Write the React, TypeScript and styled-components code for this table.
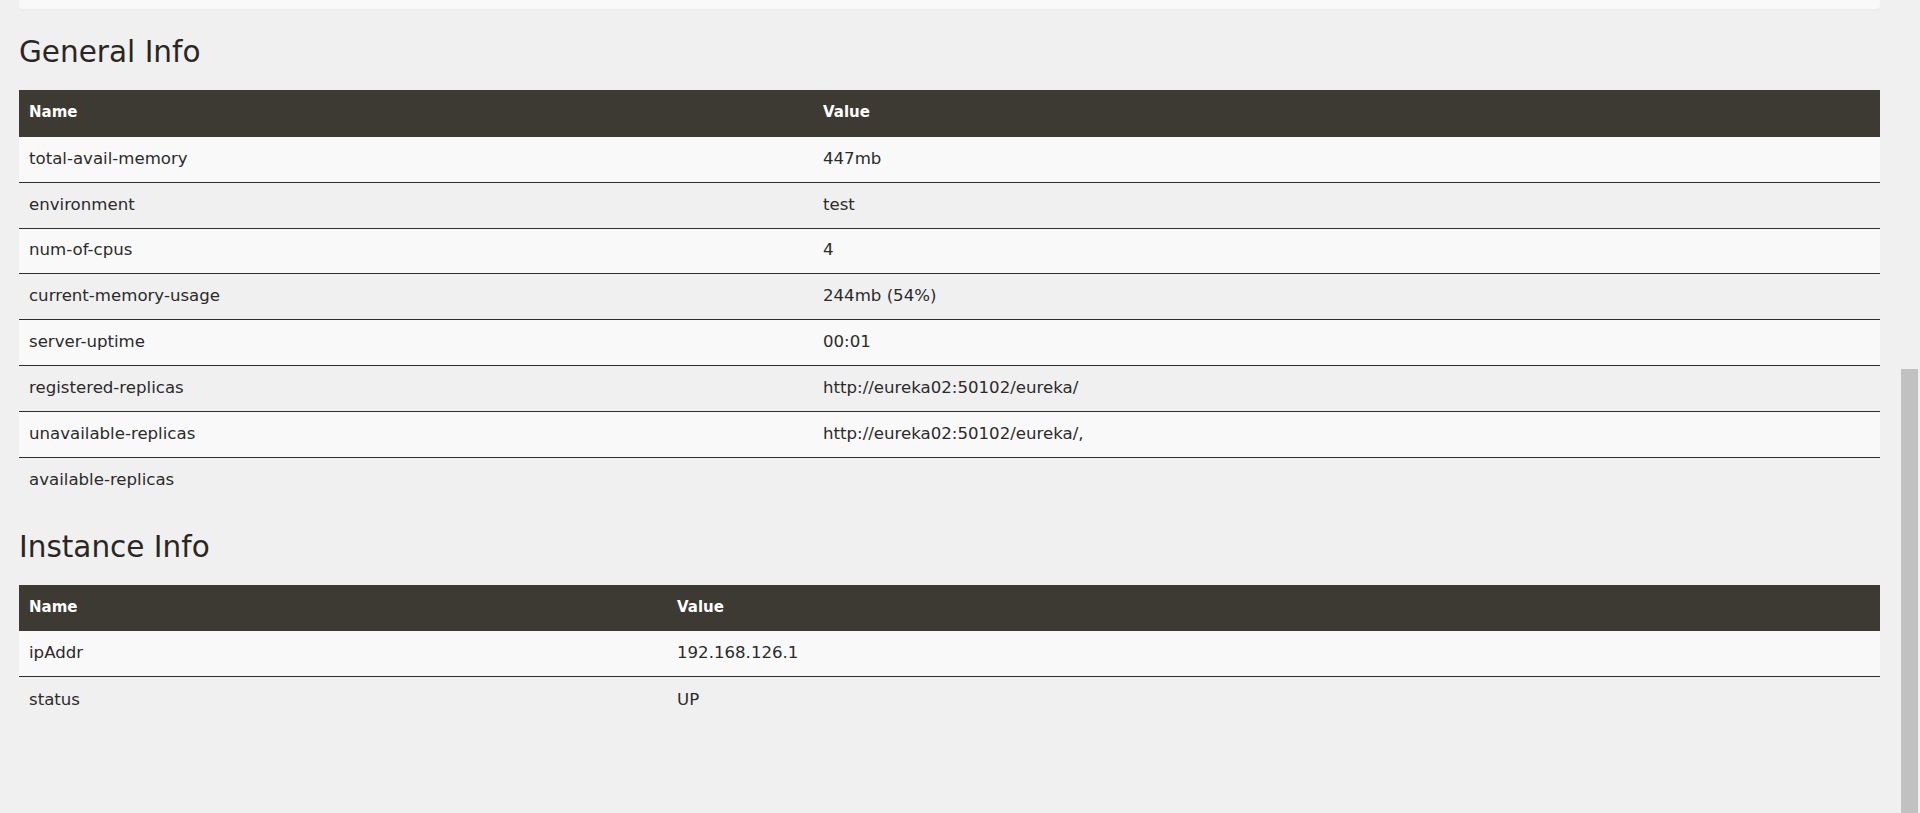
import React from "react";
import styled, { createGlobalStyle } from "styled-components";

const GlobalStyle = createGlobalStyle`
  html, body {
    margin: 0;
    padding: 0;
    height: 100%;
    overflow: hidden;
    background: #f0f0f0;
  }
  body {
    font-family: "DejaVu Sans", "Noto Sans", sans-serif;
    color: #2b2b2b;
  }
`;

const Page = styled.div`
  display: flex;
  height: 100vh;
`;

const Main = styled.div`
  flex: 1;
  min-width: 0;
  padding: 0 20px 0 19px;
`;

const TopCard = styled.div`
  height: 9px;
  background: #f9f9f9;
  border-radius: 0 0 4px 4px;
  box-shadow: 0 1px 2px rgba(0, 0, 0, 0.03);
`;

const SectionTitle = styled.h2`
  margin: 25px 0 20px;
  font-size: 29.5px;
  line-height: 36px;
  font-weight: 400;
  color: #2a2723;
`;

const Table = styled.div`
  width: 100%;
`;

const Row = styled.div<{ $nameWidth: number; $striped?: boolean; $last?: boolean }>`
  display: grid;
  grid-template-columns: ${(p) => p.$nameWidth}px 1fr;
  align-items: center;
  box-sizing: border-box;
  height: 45.86px;
  padding-bottom: 2px;
  background: ${(p) => (p.$striped ? "#f9f9f9" : "transparent")};
  border-bottom: ${(p) => (p.$last ? "none" : "1px solid #2e2e2e")};
  font-size: 16.6px;
`;

const HeadRow = styled(Row)`
  height: 46.8px;
  background: #3d3a34;
  border-bottom: none;
  color: #ffffff;
  font-size: 15px;
  font-weight: 700;
`;

const Cell = styled.div`
  padding: 0 10px;
  white-space: nowrap;
`;

const ScrollTrack = styled.div`
  width: 20px;
  flex-shrink: 0;
  display: flex;
  flex-direction: column;
  background: #f0f0f0;
`;

const ScrollThumb = styled.div`
  margin: 369px 2px 0 1px;
  flex: 1;
  background: #c1c1c1;
`;

type Pair = [string, string];

const generalInfo: Pair[] = [
  ["total-avail-memory", "447mb"],
  ["environment", "test"],
  ["num-of-cpus", "4"],
  ["current-memory-usage", "244mb (54%)"],
  ["server-uptime", "00:01"],
  ["registered-replicas", "http://eureka02:50102/eureka/"],
  ["unavailable-replicas", "http://eureka02:50102/eureka/,"],
  ["available-replicas", ""],
];

const instanceInfo: Pair[] = [
  ["ipAddr", "192.168.126.1"],
  ["status", "UP"],
];

function InfoTable({ rows, nameWidth }: { rows: Pair[]; nameWidth: number }) {
  return (
    <Table>
      <HeadRow $nameWidth={nameWidth}>
        <Cell>Name</Cell>
        <Cell>Value</Cell>
      </HeadRow>
      {rows.map(([name, value], i) => (
        <Row
          key={name}
          $nameWidth={nameWidth}
          $striped={i % 2 === 0}
          $last={i === rows.length - 1}
        >
          <Cell>{name}</Cell>
          <Cell>{value}</Cell>
        </Row>
      ))}
    </Table>
  );
}

export default function App() {
  return (
    <Page>
      <GlobalStyle />
      <Main>
        <TopCard />
        <SectionTitle>General Info</SectionTitle>
        <InfoTable rows={generalInfo} nameWidth={794} />
        <SectionTitle>Instance Info</SectionTitle>
        <InfoTable rows={instanceInfo} nameWidth={648} />
      </Main>
      <ScrollTrack>
        <ScrollThumb />
      </ScrollTrack>
    </Page>
  );
}
